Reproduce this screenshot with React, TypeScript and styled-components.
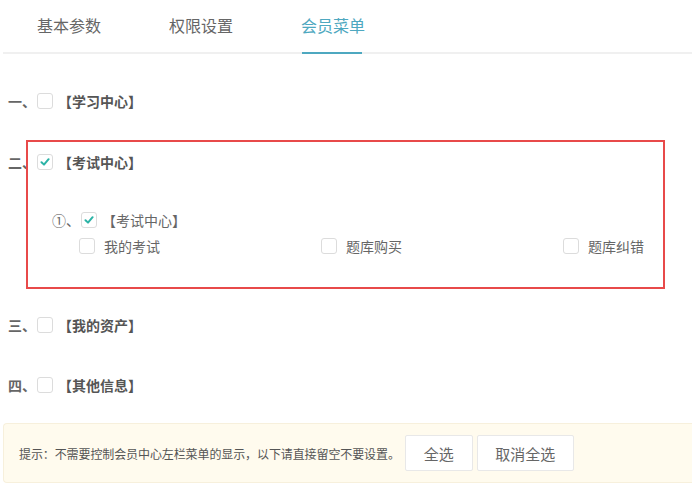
import styled, { createGlobalStyle } from "styled-components";

const GlobalStyle = createGlobalStyle`
  html, body {
    margin: 0;
    padding: 0;
    background: #fff;
  }
  body {
    font-family: "Noto Sans CJK SC", "Noto Sans", sans-serif;
    color: #666;
  }
`

const Page = styled.div`
  width: 692px;
  height: 484px;
  overflow: hidden;
  padding-left: 3px;
  box-sizing: border-box;
`

const TabBar = styled.div`
  display: flex;
  height: 52px;
  border-bottom: 2px solid #f0f0f0;
`

const Tab = styled.div<{ $active?: boolean }>`
  position: relative;
  width: 132px;
  display: flex;
  align-items: center;
  justify-content: center;
  font-size: 16px;
  color: ${props => props.$active ? "#4ea8c0" : "#666"};
  padding-bottom: 2px;
  box-sizing: border-box;

  &::after {
    content: "";
    display: ${props => props.$active ? "block" : "none"};
    position: absolute;
    left: 35px;
    right: 37px;
    bottom: -2px;
    height: 2px;
    background: #4ea8c0;
  }
`

const MenuList = styled.div`
  display: flex;
  flex-direction: column;
  padding-top: 37px;
`

const Section = styled.div<{ $gap: number }>`
  position: relative;
  margin-top: ${props => props.$gap}px;
`

/* red annotation frame drawn over the highlighted section */
const Highlight = styled.div`
  position: absolute;
  left: 23px;
  top: -12px;
  width: 639px;
  height: 149px;
  border: 2px solid #e84a4a;
  box-sizing: border-box;
  pointer-events: none;
`

const Row = styled.div<{ $indent: number }>`
  display: flex;
  align-items: center;
  height: 20px;
  padding-left: ${props => props.$indent}px;
  font-size: 14px;
`

const Index = styled.span<{ $bold?: boolean }>`
  font-weight: ${props => props.$bold ? 700 : 400};
  color: #666;
  margin-right: 1px;
`

const Box = styled.span`
  width: 16px;
  height: 16px;
  border: 1px solid #dcdcdc;
  border-radius: 3px;
  box-sizing: border-box;
  background: #fff;
  display: inline-flex;
  align-items: center;
  justify-content: center;
  flex-shrink: 0;
`

const Title = styled.span<{ $bold?: boolean }>`
  font-weight: ${props => props.$bold ? 700 : 400};
  color: ${props => props.$bold ? "#555" : "#666"};
  margin-left: 5px;
`

const SubHeader = styled(Row)`
  margin-top: 38px;
`

const SubGrid = styled.div`
  display: grid;
  grid-template-columns: 242px 242px 120px;
  padding-left: 76px;
  margin-top: 6px;
`

const SubItem = styled.label`
  display: flex;
  align-items: center;
  height: 20px;
  font-size: 14px;
  color: #666;
  gap: 9px;
`

const TipBar = styled.div`
  margin-top: 28px;
  height: 60px;
  border: 1px solid #f7f0dc;
  border-right: none;
  border-radius: 4px 0 0 4px;
  background: #fffbee;
  display: flex;
  align-items: center;
  padding-left: 15px;
  box-sizing: border-box;
`

const TipText = styled.span`
  font-size: 12px;
  color: #555;
  letter-spacing: -0.1px;
  margin-right: 5px;
`

const Button = styled.button<{ $width: number }>`
  width: ${props => props.$width}px;
  height: 36px;
  margin-right: 4px;
  background: #fff;
  border: 1px solid #e8e8e8;
  border-radius: 2px;
  font-family: inherit;
  font-size: 15px;
  color: #666;
  padding: 0;
`

const Check = ({ checked }: { checked?: boolean }) => (
  <Box>
    {checked && (
      <svg width="10" height="10" viewBox="0 0 10 10">
        <path d="M1.5 5.2 L4 7.6 L8.6 2.2" fill="none" stroke="#2bb3a6" strokeWidth="2" strokeLinecap="round" strokeLinejoin="round" />
      </svg>
    )}
  </Box>
)

const subItems = ["我的考试", "题库购买", "题库纠错"]

export default function App() {
  return (
    <Page>
      <GlobalStyle />
      <TabBar>
        <Tab>基本参数</Tab>
        <Tab>权限设置</Tab>
        <Tab $active>会员菜单</Tab>
      </TabBar>
      <MenuList>
        <Section $gap={0}>
          <Row $indent={5}>
            <Index $bold>一、</Index>
            <Check />
            <Title $bold>【学习中心】</Title>
          </Row>
        </Section>
        <Section $gap={41}>
          <Row $indent={5}>
            <Index $bold>二、</Index>
            <Check checked />
            <Title $bold>【考试中心】</Title>
          </Row>
          <SubHeader $indent={49}>
            <Index>①、</Index>
            <Check checked />
            <Title>【考试中心】</Title>
          </SubHeader>
          <SubGrid>
            {subItems.map(item => (
              <SubItem key={item}>
                <Check />
                {item}
              </SubItem>
            ))}
          </SubGrid>
          <Highlight />
        </Section>
        <Section $gap={59}>
          <Row $indent={5}>
            <Index $bold>三、</Index>
            <Check />
            <Title $bold>【我的资产】</Title>
          </Row>
        </Section>
        <Section $gap={40}>
          <Row $indent={5}>
            <Index $bold>四、</Index>
            <Check />
            <Title $bold>【其他信息】</Title>
          </Row>
        </Section>
        <TipBar>
          <TipText>提示：不需要控制会员中心左栏菜单的显示，以下请直接留空不要设置。</TipText>
          <Button $width={68}>全选</Button>
          <Button $width={97}>取消全选</Button>
        </TipBar>
      </MenuList>
    </Page>
  )
}
